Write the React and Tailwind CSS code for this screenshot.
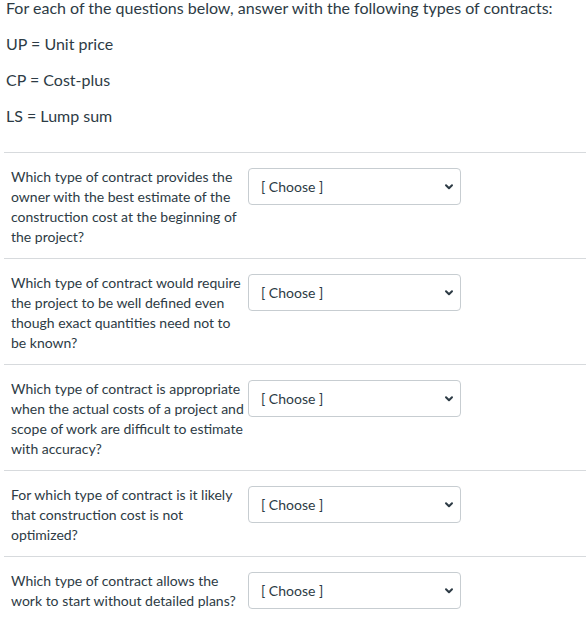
import React from 'react';

const questions = [
  ["Which type of contract provides the", "owner with the best estimate of the", "construction cost at the beginning of", "the project?"],
  ["Which type of contract would require", "the project to be well defined even", "though exact quantities need not to", "be known?"],
  ["Which type of contract is appropriate", "when the actual costs of a project and", "scope of work are difficult to estimate", "with accuracy?"],
  ["For which type of contract is it likely", "that construction cost is not", "optimized?"],
  ["Which type of contract allows the", "work to start without detailed plans?"],
];

const Chevron = () => (
  <svg width="10" height="8" viewBox="0 0 10 8" className="shrink-0">
    <path d="M2 2.2 L5 5.2 L8 2.2" fill="none" stroke="#2d3b45" strokeWidth="2" strokeLinecap="round" strokeLinejoin="round" />
  </svg>
);

const Choose = () => (
  <div className="w-[213px] h-[37px] border border-[#c7cdd1] rounded-[4px] bg-white flex items-center justify-between pl-[12px] pr-[6px] shrink-0">
    <span className="text-[14px] text-[#2d3b45]">[ Choose ]</span>
    <Chevron />
  </div>
);

export default function App() {
  return (
    <div className="w-[586px] h-[633px] overflow-hidden bg-white text-[#2d3b45] font-['Lato',sans-serif]">
      <div className="pl-[6px] -mt-[4px] text-[16px] leading-[24px]">
        <p>For each of the questions below, answer with the following types of contracts:</p>
        <p className="mt-[12px]">UP = Unit price</p>
        <p className="mt-[12px]">CP = Cost-plus</p>
        <p className="mt-[12px]">LS = Lump sum</p>
      </div>
      <div className="ml-[4px] mt-[24px]">
        {questions.map((q, i) => (
          <div key={i} className="border-t border-[#d7dadd] flex items-start pt-[14px] pb-[11px] pl-[7px]">
            <div className="w-[237px] text-[14px] leading-[20px] whitespace-nowrap">
              {q.map((l, j) => <div key={j}>{l}</div>)}
            </div>
            <div className="pt-[1px]">
              <Choose />
            </div>
          </div>
        ))}
      </div>
    </div>
  );
}
